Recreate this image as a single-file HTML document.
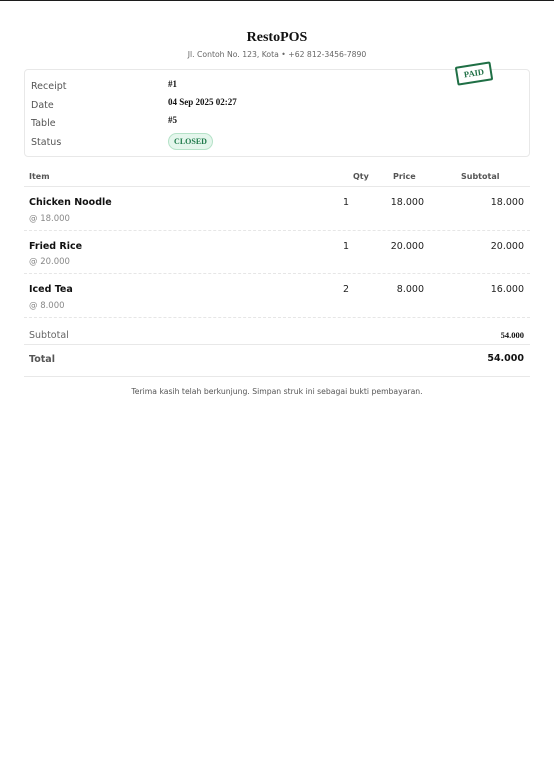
<!DOCTYPE html>
<html><head><meta charset="utf-8"><style>
*{margin:0;padding:0;box-sizing:border-box}
html,body{width:554px;height:784px;background:#fff;overflow:hidden;position:relative}
body{font-family:"DejaVu Sans","Liberation Sans",sans-serif;color:#222}
.a{position:absolute;white-space:nowrap;line-height:1}
.s{font-family:"Liberation Serif",serif;font-weight:bold;color:#111}
.lbl{font-size:9.5px;color:#555;left:31px}
.val{font-size:9px;left:168px}
.h{font-size:8px;font-weight:bold;color:#555;top:173px}
.nm{font-size:9.5px;font-weight:bold;color:#111;left:29px}
.at{font-size:8.5px;color:#888;left:29px}
.n{font-size:9.5px;color:#222;text-align:right}
.dash{position:absolute;left:24px;width:506px;border-top:1px dashed #e6e6e6}
.line{position:absolute;left:24px;width:506px;border-top:1px solid #e8e8e8}
</style></head><body>
<div style="position:absolute;left:0;top:0;width:554px;height:1px;background:#1c1c1c"></div>
<div class="a s" style="left:0;width:554px;text-align:center;top:31px;font-size:14px">RestoPOS</div>
<div class="a" style="left:0;width:554px;text-align:center;top:51px;font-size:7.7px;color:#666">Jl. Contoh No. 123, Kota • +62 812-3456-7890</div>
<div style="position:absolute;left:24px;top:69px;width:506px;height:88px;border:1px solid #e8e8e8;border-radius:4px"></div>
<div class="a lbl" style="top:82px">Receipt</div>
<div class="a lbl" style="top:101px">Date</div>
<div class="a lbl" style="top:119px">Table</div>
<div class="a lbl" style="top:138px">Status</div>
<div class="a s val" style="top:80px">#1</div>
<div class="a s val" style="top:98px">04 Sep 2025 02:27</div>
<div class="a s val" style="top:116px">#5</div>
<div class="a s" style="left:168px;top:133px;width:45px;height:17px;border:1px solid #b5e2c8;background:#e4f6ec;border-radius:9px;font-size:8px;color:#1e7a4a;text-align:center;line-height:15px">CLOSED</div>
<div class="a s" style="left:456px;top:64px;width:36px;height:19px;border:2px solid #1f6f45;border-radius:2px;transform:rotate(-9deg);font-size:8.5px;color:#1f6f45;text-align:center;line-height:15px;background:#fff">PAID</div>
<div class="a h" style="left:29px">Item</div>
<div class="a h" style="left:353px">Qty</div>
<div class="a h" style="left:393px">Price</div>
<div class="a h" style="left:461px">Subtotal</div>
<div class="line" style="top:186px"></div>

<div class="a nm" style="top:198px">Chicken Noodle</div>
<div class="a at" style="top:215px">@ 18.000</div>
<div class="a n" style="left:300px;width:49px;top:198px">1</div>
<div class="a n" style="left:360px;width:64px;top:198px">18.000</div>
<div class="a n" style="left:440px;width:84px;top:198px">18.000</div>
<div class="dash" style="top:230px"></div>

<div class="a nm" style="top:242px">Fried Rice</div>
<div class="a at" style="top:258px">@ 20.000</div>
<div class="a n" style="left:300px;width:49px;top:242px">1</div>
<div class="a n" style="left:360px;width:64px;top:242px">20.000</div>
<div class="a n" style="left:440px;width:84px;top:242px">20.000</div>
<div class="dash" style="top:273px"></div>

<div class="a nm" style="top:285px">Iced Tea</div>
<div class="a at" style="top:302px">@ 8.000</div>
<div class="a n" style="left:300px;width:49px;top:285px">2</div>
<div class="a n" style="left:360px;width:64px;top:285px">8.000</div>
<div class="a n" style="left:440px;width:84px;top:285px">16.000</div>
<div class="dash" style="top:317px"></div>

<div class="a" style="left:29px;top:331px;font-size:9.5px;color:#666">Subtotal</div>
<div class="a s" style="left:440px;width:84px;text-align:right;top:331px;font-size:8.5px">54.000</div>
<div class="line" style="top:344px"></div>
<div class="a" style="left:29px;top:355px;font-size:9.5px;font-weight:bold;color:#555">Total</div>
<div class="a" style="left:440px;width:84px;text-align:right;top:354px;font-size:9.5px;font-weight:bold;color:#111">54.000</div>
<div class="line" style="top:376px"></div>
<div class="a" style="left:0;width:554px;text-align:center;top:388px;font-size:7.7px;color:#555">Terima kasih telah berkunjung. Simpan struk ini sebagai bukti pembayaran.</div>
</body></html>
